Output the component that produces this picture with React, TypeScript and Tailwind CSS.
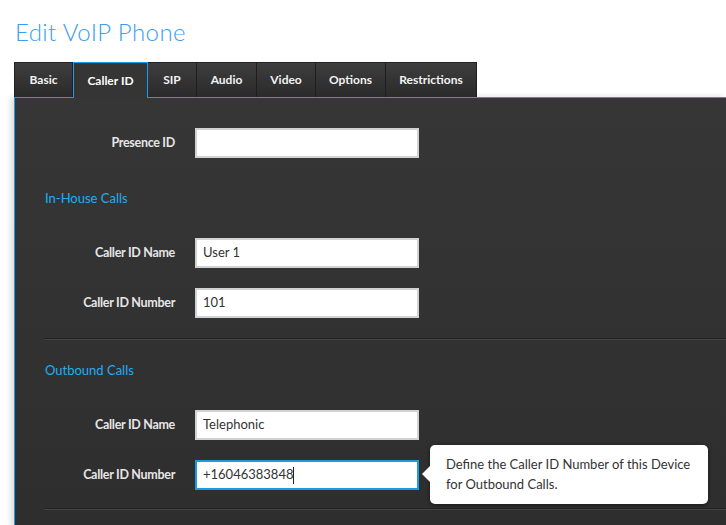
const tabs = ["Basic", "Caller ID", "SIP", "Audio", "Video", "Options", "Restrictions"];
const tabWidths = ["w-[59px]", "w-[75px]", "w-[49px]", "w-[60px]", "w-[59px]", "w-[70px]", "w-[91px]"];

interface FieldRowProps {
  label: string;
  value?: string;
  focused?: boolean;
  hint?: string;
}

function FieldRow({ label, value = "", focused = false, hint }: FieldRowProps) {
  return (
    <div className="flex items-center h-[30px]">
      <label className="w-[160px] text-right text-[12.5px] font-bold text-[#e6e6e6] tracking-[-0.3px]">
        {label}
      </label>
      <div className="relative ml-[20px]">
        <div
          className={
            focused
              ? "w-[224px] h-[30px] bg-white border-2 border-[#1a9be6] flex items-center px-[6px]"
              : "w-[224px] h-[30px] bg-white border-2 border-[#d2d2d2] flex items-center px-[6px]"
          }
        >
          <span className="text-[13px] text-[#333]">{value}</span>
          {focused && <span className="w-px h-[17px] bg-[#222]" />}
        </div>
        {hint && (
          <div className="absolute left-[235px] top-[-15px] w-[278px] h-[59px] bg-white rounded-[5px] shadow-[0_1px_4px_rgba(0,0,0,0.5)] pl-[16px] pt-[9px] text-[13px] leading-[20px] text-[#333]">
            <span className="absolute left-[-8px] top-[21px] w-0 h-0 border-y-[8px] border-y-transparent border-r-[8px] border-r-white" />
            {hint}
          </div>
        )}
      </div>
    </div>
  );
}

function SectionTitle({ children }: { children: string }) {
  return <div className="pl-[30px] h-[20px] leading-[20px] text-[13px] text-[#22aef2]">{children}</div>;
}

export default function App() {
  return (
    <div className="h-[525px] overflow-hidden bg-white font-['Lato',sans-serif] pl-[14px]">
      <h1 className="pt-[17px] h-[62px] text-[24px] leading-[30px] font-light text-[#3a9df0] pl-[1px] tracking-[0.4px]">
        Edit VoIP Phone
      </h1>
      <div className="flex h-[35px]">
        {tabs.map((t, i) =>
          t === "Caller ID" ? (
            <div
              key={t}
              className={`${tabWidths[i]} h-[36px] relative z-10 flex items-center justify-center bg-[#353535] border border-b-0 border-[#1c9cf0] text-[12px] font-bold text-white`}
            >
              {t}
            </div>
          ) : (
            <div
              key={t}
              className={`${tabWidths[i]} flex items-center justify-center bg-gradient-to-b from-[#3e3e3e] to-[#2a2a2a] border-r border-[#1e1e1e] border-t border-t-[#222] text-[12px] font-bold text-[#f2f2f2] ${i === 0 ? "border-l border-l-[#222]" : ""}`}
            >
              {t}
            </div>
          )
        )}
      </div>
      <div className="h-[430px] border-t border-l border-[#1c9cf0] bg-gradient-to-b from-[#363636] to-[#2e2e2e] shadow-[-3px_0_6px_rgba(0,0,0,0.15)]">
        <div className="pt-[30px]">
          <FieldRow label="Presence ID" />
          <div className="mt-[30px]">
            <SectionTitle>In-House Calls</SectionTitle>
          </div>
          <div className="mt-[30px] flex flex-col gap-[20px]">
            <FieldRow label="Caller ID Name" value="User 1" />
            <FieldRow label="Caller ID Number" value="101" />
          </div>
          <div className="ml-[30px] mt-[20px] h-[2px] border-t border-[#222] border-b border-b-[#454545]" />
          <div className="mt-[20px]">
            <SectionTitle>Outbound Calls</SectionTitle>
          </div>
          <div className="mt-[30px] flex flex-col gap-[20px]">
            <FieldRow label="Caller ID Name" value="Telephonic" />
            <FieldRow
              label="Caller ID Number"
              value="+16046383848"
              focused
              hint="Define the Caller ID Number of this Device for Outbound Calls."
            />
          </div>
          <div className="ml-[30px] mt-[18px] h-[2px] border-t border-[#222] border-b border-b-[#454545]" />
        </div>
      </div>
    </div>
  );
}
